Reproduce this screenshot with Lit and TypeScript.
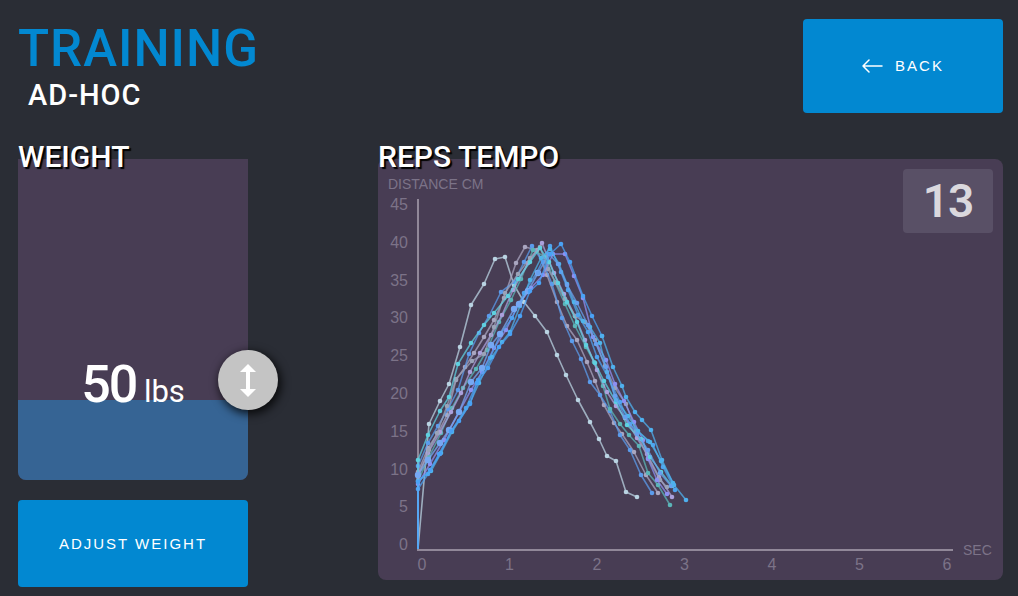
import { LitElement, html, svg, css } from "lit";
import { customElement, property, state } from "lit/decorators.js";

type Point = [number, number];
interface Rep {
  color: string;
  dot: number;
  points: Point[];
}

// Converts a flat list of x,y values into points of the chart canvas.
const trace = (color: string, dot: number, values: number[]): Rep => {
  const points: Point[] = [];
  for (let i = 0; i < values.length; i += 2) {
    points.push([values[i] - 378, values[i + 1] - 159]);
  }
  return { color, dot, points };
};

const REPS: Rep[] = [
  trace("#b9d3e2", 2.3, [418, 549, 429, 424, 440, 401, 449, 384, 460, 347, 471, 305, 484, 284, 495, 259, 505, 257, 514, 285, 524, 302, 535, 316, 547, 332, 557, 355, 566, 375, 578, 400, 590, 422, 599, 439, 607, 456, 616, 461, 626, 492, 637, 497]),
  trace("#a9a6c0", 2.3, [418, 549, 418, 472, 428, 448, 438, 433, 447, 415, 456, 380, 465, 367, 474, 353, 484, 337, 494, 320, 504, 298, 516, 263, 525, 247, 537, 250, 547, 275, 557, 302, 567, 326, 577, 340, 587, 362, 595, 381, 604, 405, 614, 423, 622, 434, 634, 452, 646, 475, 658, 493]),
  trace("#5b9cec", 2.3, [418, 549, 418, 466, 428, 443, 438, 426, 448, 409, 458, 390, 469, 354, 479, 333, 489, 316, 501, 292, 514, 282, 524, 262, 532, 246, 543, 262, 552, 284, 562, 318, 572, 341, 581, 359, 590, 382, 600, 395, 610, 411, 620, 435, 630, 450, 641, 475, 652, 493]),
  trace("#5bb5b8", 2.3, [418, 549, 418, 481, 429, 457, 441, 433, 452, 408, 463, 388, 476, 369, 487, 350, 499, 322, 511, 300, 521, 279, 533, 250, 545, 257, 555, 282, 565, 304, 575, 326, 586, 347, 594, 362, 603, 386, 610, 409, 620, 424, 629, 435, 639, 446, 648, 473, 658, 485, 670, 505]),
  trace("#aba0dc", 2.3, [418, 549, 418, 475, 428, 453, 440, 432, 451, 412, 461, 393, 470, 372, 480, 353, 491, 335, 502, 315, 513, 290, 528, 263, 542, 243, 554, 273, 564, 294, 575, 316, 585, 340, 597, 370, 607, 392, 616, 406, 625, 418, 637, 438, 647, 454, 659, 477, 672, 497]),
  trace("#9ba3b8", 2.3, [418, 549, 418, 477, 429, 450, 437, 433, 447, 406, 456, 379, 472, 361, 484, 354, 494, 327, 505, 293, 518, 274, 530, 258, 540, 247, 548, 269, 556, 283, 565, 299, 575, 316, 585, 322, 595, 340, 605, 366, 615, 388, 626, 404, 636, 431, 648, 458, 660, 480, 667, 487]),
  trace("#8d90f2", 2.3, [418, 549, 418, 484, 430, 464, 444, 440, 459, 412, 471, 390, 482, 372, 494, 348, 506, 330, 518, 305, 531, 288, 543, 275, 553, 254, 565, 254, 574, 276, 583, 298, 593, 337, 606, 360, 615, 384, 624, 401, 634, 422, 643, 440, 648, 459, 657, 480, 667, 494]),
  trace("#4fa3f0", 2.3, [418, 549, 418, 489, 428, 474, 439, 454, 452, 430, 466, 408, 478, 380, 490, 358, 500, 335, 512, 318, 524, 293, 537, 272, 550, 246, 561, 272, 568, 290, 578, 315, 588, 332, 597, 357, 608, 377, 620, 402, 630, 424, 648, 441, 653, 445, 663, 467, 675, 490]),
  trace("#5fd0e0", 2.3, [418, 549, 418, 460, 428, 435, 440, 411, 449, 397, 458, 364, 471, 343, 484, 325, 494, 313, 508, 296, 518, 279, 530, 262, 540, 248, 549, 262, 558, 283, 567, 302, 577, 322, 586, 345, 595, 363, 604, 381, 616, 402, 627, 425, 641, 439, 650, 457, 661, 472, 672, 486]),
  trace("#50b4ea", 2.3, [418, 549, 418, 481, 431, 471, 441, 453, 452, 432, 470, 403, 479, 383, 492, 357, 502, 342, 510, 332, 520, 306, 530, 280, 541, 258, 550, 249, 559, 264, 567, 284, 574, 302, 583, 321, 590, 327, 600, 343, 607, 372, 616, 400, 628, 416, 638, 431, 650, 442, 661, 461, 673, 483]),
  trace("#76a8f3", 3.2, [418, 549, 418, 475, 428, 460, 440, 443, 449, 430, 459, 412, 471, 382, 482, 368, 491, 345, 500, 334, 514, 309, 519, 304, 528, 291, 538, 273]),
  trace("#68a0ee", 2.3, [538, 273, 549, 254, 558, 264, 567, 285, 577, 303, 588, 325, 596, 344, 606, 367, 615, 396, 625, 417, 637, 434, 648, 450, 660, 473, 671, 486]),
  trace("#4aa2f6", 2.3, [418, 549, 418, 482, 430, 470, 440, 454, 451, 431, 459, 421, 470, 404, 477, 383, 488, 368, 499, 347, 510, 334, 520, 316, 530, 291, 539, 283, 550, 254, 561, 244, 570, 262, 583, 296, 592, 316, 602, 336]),
  trace("#4fb0ee", 2.3, [602, 336, 613, 367, 622, 386, 626, 397, 635, 412, 642, 420, 651, 430, 662, 460, 674, 485, 686, 500]),
];

@customElement("tempo-chart")
export class TempoChart extends LitElement {
  @property({ type: Number }) reps = 0;

  static styles = css`
    :host {
      display: block;
      position: relative;
      background: #483d54;
      border-radius: 8px;
    }
    .plot {
      display: block;
      width: 100%;
      height: auto;
    }
    .label {
      font-family: "Liberation Sans", Arial, sans-serif;
      fill: #7c7388;
      font-size: 16px;
    }
    .caption {
      font-size: 14px;
    }
    .mid {
      text-anchor: middle;
    }
    .end {
      text-anchor: end;
    }
    .axis {
      stroke: #918899;
      stroke-width: 2;
      fill: none;
    }
    .line {
      fill: none;
      stroke-width: 1.6;
      stroke-linejoin: round;
      opacity: 0.75;
    }
    .count {
      position: absolute;
      top: 10px;
      right: 10px;
      width: 90px;
      border-radius: 4px;
      background: #595066;
      color: #dad8dd;
      font: 600 46px/64px Roboto, sans-serif;
      letter-spacing: -1px;
      text-align: center;
    }
  `;

  render() {
    return html`
      <svg class="plot" viewBox="0 0 625 421" role="img" aria-label="Distance per second for each repetition">
        <text class="label caption" x="10" y="30">DISTANCE CM</text>
        ${[45, 40, 35, 30, 25, 20, 15, 10, 5, 0].map(
          (v, i) => svg`<text class="label end" x="30" y=${51 + i * 37.8}>${v}</text>`
        )}
        ${[0, 1, 2, 3, 4, 5, 6].map(
          (v) => svg`<text class="label mid" x=${44 + v * 87.5} y="411">${v}</text>`
        )}
        <path class="axis" d="M40 40V391H575" />
        <text class="label caption" x="585" y="396">SEC</text>
        ${REPS.map(
          (rep) => svg`
            <polyline class="line" stroke=${rep.color} points=${rep.points.map((p) => p.join(",")).join(" ")} />
            ${rep.points
              .filter((p) => p[1] < 390)
              .map((p) => svg`<circle cx=${p[0]} cy=${p[1]} r=${rep.dot} fill=${rep.color} />`)}
          `
        )}
      </svg>
      <output class="count">${this.reps}</output>
    `;
  }
}

@customElement("weight-gauge")
export class WeightGauge extends LitElement {
  @state() private weight = 50;
  private readonly max = 200;

  static styles = css`
    :host {
      display: block;
      position: relative;
      height: 321px;
      color: #fff;
      font-family: Roboto, sans-serif;
    }
    .track {
      display: flex;
      flex-direction: column;
      justify-content: flex-end;
      height: 100%;
      background: #483d54;
      border-radius: 0 0 8px 8px;
      overflow: hidden;
    }
    .fill {
      background: #366494;
    }
    .reading {
      position: absolute;
      inset: auto 0 58px;
      text-align: center;
      line-height: 60px;
      font-size: 31px;
    }
    .number {
      font-size: 52px;
      font-weight: 500;
      letter-spacing: -2px;
    }
    .slider {
      position: absolute;
      top: -20px;
      bottom: 0;
      right: -30px;
      width: 60px;
      height: auto;
      margin: 0;
      appearance: none;
      background: none;
      writing-mode: vertical-lr;
      direction: rtl;
      cursor: ns-resize;
    }
    .slider::-webkit-slider-thumb {
      appearance: none;
      width: 60px;
      height: 60px;
      border-radius: 50%;
      box-shadow: 2px 3px 10px 1px rgba(0, 0, 0, 0.8);
      background: #c4c4c4
        url("data:image/svg+xml,%3Csvg xmlns='http://www.w3.org/2000/svg' viewBox='0 0 60 60'%3E%3Cpath fill='white' d='M30 14l8 8h-6v17h6l-8 8-8-8h6V22h-6z'/%3E%3C/svg%3E")
        center / 60px 60px no-repeat;
    }
  `;

  private onInput(e: Event) {
    this.weight = Number((e.target as HTMLInputElement).value);
  }

  render() {
    return html`
      <div class="track">
        <div class="fill" style="height:${(this.weight / this.max) * 100}%"></div>
      </div>
      <div class="reading"><span class="number">${this.weight}</span> lbs</div>
      <input
        class="slider"
        type="range"
        min="0"
        max=${this.max}
        .value=${String(this.weight)}
        aria-label="Weight in pounds"
        @input=${this.onInput}
      />
    `;
  }
}

@customElement("app-root")
export class AppRoot extends LitElement {
  static styles = css`
    :host {
      display: block;
      box-sizing: border-box;
      min-height: 100vh;
      padding: 19px 15px 9px 18px;
      background: #2a2d35;
      color: #fff;
      font-family: Roboto, sans-serif;
    }
    .header {
      display: flex;
      justify-content: space-between;
      align-items: flex-start;
    }
    .title {
      margin: 0;
      color: #0288d1;
      font-size: 51px;
      line-height: 60px;
      font-weight: 500;
      letter-spacing: 1px;
    }
    .subtitle {
      margin: 0 0 0 10px;
      font-size: 29px;
      line-height: 32px;
      font-weight: 500;
      letter-spacing: 1px;
    }
    .button {
      display: flex;
      align-items: center;
      justify-content: center;
      gap: 12px;
      border: 0;
      border-radius: 4px;
      padding: 0;
      background: #0288d1;
      color: #fff;
      font: 15px/20px "Liberation Sans", Arial, sans-serif;
      letter-spacing: 2px;
      cursor: pointer;
    }
    .back {
      width: 200px;
      height: 94px;
    }
    .adjust {
      width: 100%;
      height: 87px;
      margin-top: 20px;
    }
    .arrow {
      width: 21px;
      height: 14px;
      fill: none;
      stroke: #fff;
      stroke-width: 1.5;
      stroke-linecap: round;
      stroke-linejoin: round;
    }
    .main {
      display: grid;
      grid-template-columns: 230px minmax(0, 1fr);
      gap: 130px;
      align-items: start;
      margin-top: 26px;
    }
    .heading {
      position: relative;
      z-index: 1;
      margin: 0 0 -16px;
      font-size: 30px;
      line-height: 36px;
      font-weight: 500;
      text-shadow: 2px 2px 1px #000;
    }
  `;

  render() {
    return html`
      <header class="header">
        <div>
          <h1 class="title">TRAINING</h1>
          <p class="subtitle">AD-HOC</p>
        </div>
        <button class="button back" type="button">
          <svg class="arrow" viewBox="0 0 21 14" aria-hidden="true">
            <path d="M20 7H1M7 1L1 7L7 13" />
          </svg>
          BACK
        </button>
      </header>
      <main class="main">
        <section>
          <h2 class="heading">WEIGHT</h2>
          <weight-gauge></weight-gauge>
          <button class="button adjust" type="button">ADJUST WEIGHT</button>
        </section>
        <section>
          <h2 class="heading">REPS TEMPO</h2>
          <tempo-chart .reps=${13}></tempo-chart>
        </section>
      </main>
    `;
  }
}
